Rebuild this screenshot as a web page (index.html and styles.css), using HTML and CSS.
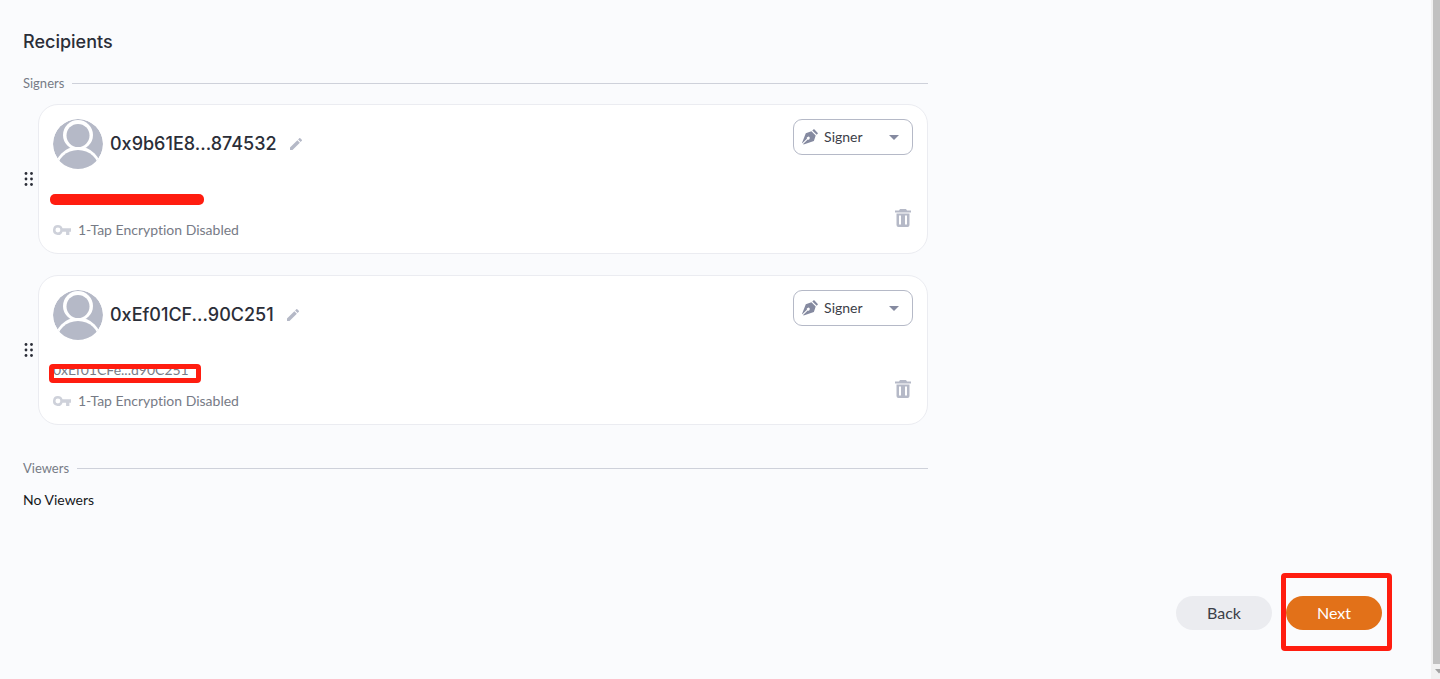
FILE: index.html
```html
<!DOCTYPE html>
<html lang="en">
<head>
    <meta charset="UTF-8">
    <meta name="viewport" content="width=device-width, initial-scale=1.0">
    <title>Recipients</title>
    <link rel="stylesheet" href="styles.css">
</head>
<body>
    <!-- shared icons -->
    <svg class="sprite" aria-hidden="true">
        <symbol id="avatar" viewBox="0 0 50 50">
            <clipPath id="avatarClip"><circle cx="25" cy="25" r="25"/></clipPath>
            <g clip-path="url(#avatarClip)">
                <circle cx="25" cy="25" r="25" fill="#b5b9c7"/>
                <circle cx="25" cy="51" r="23.5" fill="#fff"/>
                <circle cx="25" cy="16" r="15" fill="#fff"/>
                <circle cx="25" cy="16.5" r="11.5" fill="#b5b9c7"/>
                <ellipse cx="25" cy="51" rx="21" ry="20" fill="#b5b9c7"/>
            </g>
        </symbol>
        <symbol id="pencil" viewBox="3 3 18 18">
            <path d="M3 17.25V21h3.75L17.8 9.94l-3.75-3.75L3 17.25zM20.7 7.04a1 1 0 0 0 0-1.41l-2.33-2.34a1 1 0 0 0-1.41 0l-1.83 1.83 3.75 3.75 1.82-1.83z"/>
        </symbol>
        <symbol id="key" viewBox="1 6 22 12">
            <path d="M12.65 10A6 6 0 0 0 7 6a6 6 0 1 0 5.65 8H17v4h4v-4h2v-4H12.65zM7 15a3 3 0 1 1 0-6 3 3 0 0 1 0 6z"/>
        </symbol>
        <symbol id="trash" viewBox="0 0 16 18">
            <path d="M5 0h6l1 1.5h4v2H0v-2h4zM1.5 4.5h13V16a2 2 0 0 1-2 2h-9a2 2 0 0 1-2-2zM4 6.5v9h2v-9zm6 0v9h2v-9z" fill-rule="evenodd"/>
        </symbol>
        <symbol id="pen" viewBox="0 0 16 16">
            <path d="M10.3 1.4L12 0l4 4.2-1.3 1.6z"/>
            <path d="M9.4 2.3l4.3 4.3-1.8 5.4L1.6 15.5l-.5-.4 4.6-4.6a1.5 1.5 0 1 0-.8-.8L.3 14.3l-.3-.4L3.8 4.3z"/>
        </symbol>
        <symbol id="grip" viewBox="0 0 9 14">
            <circle cx="1.5" cy="1.5" r="1.4"/><circle cx="7" cy="1.5" r="1.4"/>
            <circle cx="1.5" cy="7" r="1.4"/><circle cx="7" cy="7" r="1.4"/>
            <circle cx="1.5" cy="12.5" r="1.4"/><circle cx="7" cy="12.5" r="1.4"/>
        </symbol>
    </svg>

    <main class="page">
        <div class="recipients">
            <h1>Recipients</h1>

            <h2 class="divider">Signers</h2>
            <ul class="signers">
                <li class="signer">
                    <button class="icon-button" aria-label="Reorder"><svg class="grip"><use href="#grip"/></svg></button>
                    <div class="card">
                        <div class="info">
                            <div class="person">
                                <svg class="avatar"><use href="#avatar"/></svg>
                                <h3>0x9b61E8...874532</h3>
                                <button class="icon-button" aria-label="Edit name"><svg class="pencil"><use href="#pencil"/></svg></button>
                            </div>
                            <p class="address">0x9b61E8c...f874532<span class="mark-strike"></span></p>
                            <p class="encryption"><svg class="key"><use href="#key"/></svg>1-Tap Encryption Disabled</p>
                        </div>
                        <div class="actions">
                            <div class="role">
                                <svg class="pen"><use href="#pen"/></svg>
                                <select aria-label="Role">
                                    <option>Signer</option>
                                    <option>Viewer</option>
                                </select>
                            </div>
                            <button class="icon-button" aria-label="Remove signer"><svg class="trash"><use href="#trash"/></svg></button>
                        </div>
                    </div>
                </li>
                <li class="signer">
                    <button class="icon-button" aria-label="Reorder"><svg class="grip"><use href="#grip"/></svg></button>
                    <div class="card">
                        <div class="info">
                            <div class="person">
                                <svg class="avatar"><use href="#avatar"/></svg>
                                <h3>0xEf01CF...90C251</h3>
                                <button class="icon-button" aria-label="Edit name"><svg class="pencil"><use href="#pencil"/></svg></button>
                            </div>
                            <p class="address">0xEf01CFe...d90C251<span class="mark-box"></span></p>
                            <p class="encryption"><svg class="key"><use href="#key"/></svg>1-Tap Encryption Disabled</p>
                        </div>
                        <div class="actions">
                            <div class="role">
                                <svg class="pen"><use href="#pen"/></svg>
                                <select aria-label="Role">
                                    <option>Signer</option>
                                    <option>Viewer</option>
                                </select>
                            </div>
                            <button class="icon-button" aria-label="Remove signer"><svg class="trash"><use href="#trash"/></svg></button>
                        </div>
                    </div>
                </li>
            </ul>

            <h2 class="divider">Viewers</h2>
            <p class="empty">No Viewers</p>
        </div>

        <div class="buttons">
            <button class="button">Back</button>
            <div class="highlighted">
                <button class="button primary">Next</button>
                <span class="mark-next"></span>
            </div>
        </div>
    </main>

    <div class="scrollbar" aria-hidden="true">
        <div class="thumb"></div>
        <svg class="arrow" viewBox="0 0 8 5"><path d="M0 0h8L4 4.5z"/></svg>
    </div>
</body>
</html>
```
FILE: styles.css
```css
* {
    box-sizing: border-box;
}

body {
    margin: 0;
    display: flex;
    min-height: 100vh;
    background-color: #fafbfd;
    font-family: Lato, "Liberation Sans", sans-serif;
    font-size: 14px;
    line-height: 20px;
    font-variant-ligatures: none;
    color: #16181b;
    overflow: hidden;
}

h1, h2, h3, p, ul {
    margin: 0;
    padding: 0;
}

.sprite {
    position: absolute;
    width: 0;
    height: 0;
}

.page {
    flex: 1;
    padding: 30px 49px 0 23px;
}

.recipients {
    width: 66.6%;
}

h1, h3 {
    font-family: Inter, sans-serif;
    font-size: 18px;
    font-weight: 500;
    line-height: 24px;
    color: #2b2e38;
}

.divider {
    display: flex;
    align-items: center;
    gap: 8px;
    margin-top: 19px;
    font-size: 13px;
    font-weight: 400;
    color: #777b86;
}

.divider::after {
    content: "";
    flex: 1;
    height: 1px;
    background-color: #ced1da;
}

.signers {
    display: flex;
    flex-direction: column;
    gap: 21px;
    margin: 11px 0 33px;
    list-style: none;
}

.signer {
    display: flex;
    align-items: center;
    gap: 3px;
}

.card {
    flex: 1;
    display: flex;
    justify-content: space-between;
    padding: 14px 14px 13px;
    background-color: #fff;
    border: 1px solid #ebecf1;
    border-radius: 20px;
}

.person {
    display: flex;
    align-items: center;
    gap: 7px;
    height: 50px;
}

.avatar {
    width: 50px;
    height: 50px;
}

.person .icon-button {
    margin-left: 6px;
}

.icon-button {
    display: flex;
    padding: 0;
    border: none;
    background: none;
    cursor: pointer;
}

.grip {
    width: 12px;
    height: 14px;
    fill: #2b2e38;
}

.pencil {
    width: 12px;
    height: 12px;
    fill: #b5b9c7;
}

.address {
    position: relative;
    width: max-content;
    margin-top: 20px;
    color: #777b86;
}

.encryption {
    display: flex;
    align-items: center;
    gap: 7px;
    margin-top: 11px;
    color: #777b86;
}

.key {
    width: 18px;
    height: 10px;
    fill: #ced1da;
}

.actions {
    display: flex;
    flex-direction: column;
    justify-content: space-between;
    align-items: flex-end;
    padding-bottom: 13px;
}

.role {
    position: relative;
}

.pen {
    position: absolute;
    left: 9px;
    top: 10px;
    width: 16px;
    height: 16px;
    fill: #858aa0;
    pointer-events: none;
}

.role::after {
    content: "";
    position: absolute;
    right: 14px;
    top: 16px;
    border: 5px solid transparent;
    border-top-color: #858aa0;
    border-bottom: none;
    pointer-events: none;
}

.role select {
    appearance: none;
    width: 120px;
    height: 36px;
    padding: 0 30px;
    border: 1px solid #b5b9c7;
    border-radius: 9px;
    background-color: #fff;
    font: inherit;
    color: #3c4048;
}

.trash {
    width: 16px;
    height: 18px;
    margin-right: 2px;
    fill: #b5b9c7;
}

.empty {
    margin-top: 12px;
}

.buttons {
    display: flex;
    justify-content: flex-end;
    gap: 14px;
    margin-top: 86px;
}

.button {
    width: 96px;
    height: 34px;
    border: none;
    border-radius: 17px;
    background-color: #ebecf0;
    font: inherit;
    font-size: 16px;
    color: #3c4048;
    cursor: pointer;
}

.primary {
    background-color: #e27119;
    color: #fff;
}

.highlighted {
    position: relative;
}

/* red marker annotations */
.mark-strike {
    position: absolute;
    left: -3px;
    top: 5px;
    width: 154px;
    height: 11px;
    border-radius: 5px;
    background-color: #ff1d10;
}

.mark-box {
    position: absolute;
    left: -4px;
    top: 4px;
    width: 152px;
    height: 19px;
    border: 5px solid #ff1d10;
    border-radius: 4px;
}

.mark-next {
    position: absolute;
    inset: -23px -10px -21px -5px;
    border: 5px solid #ff1d10;
    border-radius: 4px;
    pointer-events: none;
}

.scrollbar {
    display: flex;
    flex-direction: column;
    width: 9px;
    padding-left: 2px;
    background-color: #f1f1f1;
    overflow: hidden;
}

.thumb {
    flex: 1;
    background-color: #c1c1c1;
}

.arrow {
    width: 8px;
    height: 5px;
    margin: 5px 0 5px 2px;
    fill: #a3a3a3;
}
```
